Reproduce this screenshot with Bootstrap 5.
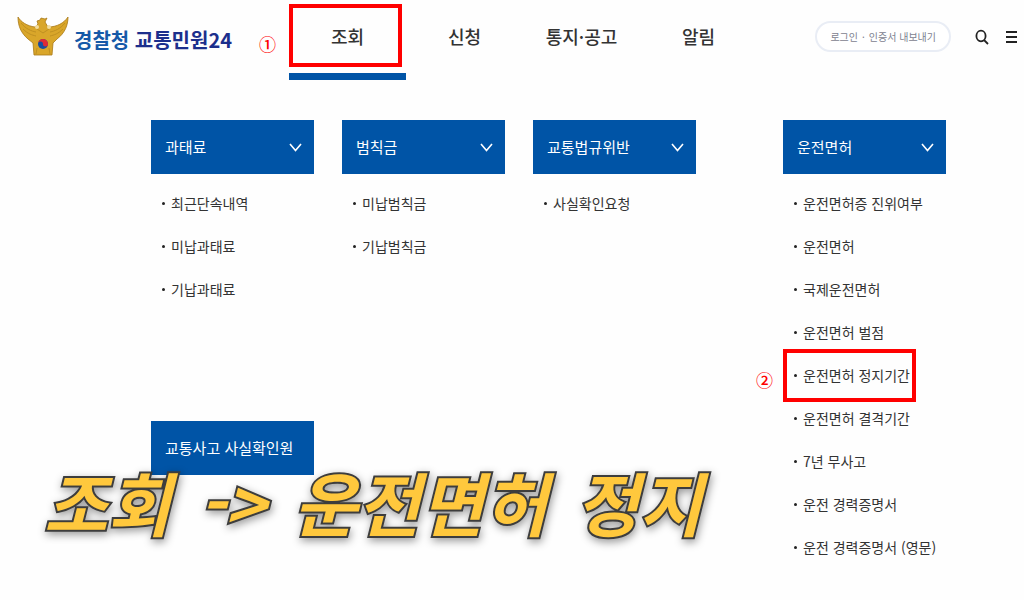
<!DOCTYPE html>
<html lang="ko">
<head>
<meta charset="utf-8">
<meta name="viewport" content="width=device-width, initial-scale=1">
<title>경찰청 교통민원24</title>
<link href="https://cdn.jsdelivr.net/npm/bootstrap@5.3.0/dist/css/bootstrap.min.css" rel="stylesheet">
<style>
  body { font-family: "Noto Sans CJK KR", sans-serif; color: #333; background: #fefefe; font-size: 14px; }
  .site-header { height: 80px; padding: 0 6px 0 17px; }
  .brand-link { width: 272px; font-size: 20px; font-weight: 700; color: #1c2f8c; gap: 5px; white-space: nowrap; }
  .brand-link .agency { color: #1559a8; }
  .main-menu .menu-link { width: 117px; height: 80px; font-size: 18px; font-weight: 500; color: #333; border-bottom: 7px solid transparent; }
  .main-menu .menu-link.active { border-color: #0054a6; }
  .login-pill { height: 31px; padding: 0 13px; gap: 4px; font-size: 10px; color: #7d828f; background: #fff; border: 2px solid #e9edf5; border-radius: 16px; white-space: nowrap; }
  .tool-button { padding: 0; border: 0; background: none; color: #222; line-height: 1; }
  .red-frame { border: 4px solid #f00; pointer-events: none; }
  .menu-frame { top: 4px; left: 0; width: 113px; height: 63px; }
  .step { color: #f00; font-size: 17px; line-height: 24px; font-weight: 500; }
  .step-one { left: -30px; top: 32px; }
  .step-two { left: -36px; top: 14px; }
  .sitemap { grid-template-columns: 1fr 1fr 1fr 31px 1fr; grid-template-rows: minmax(273px, auto) auto; gap: 28px; padding: 40px 78px 0 151px; }
  .license-group { grid-column: 5; grid-row: 1 / span 2; }
  .accident-group { grid-column: 1; grid-row: 2; }
  .group-button { height: 54px; padding: 0 12px 0 14px; border: 0; border-radius: 0; background: #0054a6; color: #fff; font-size: 15px; white-space: nowrap; }
  .group-list { padding: 8px 0 0 9px; margin: 0; list-style: none; }
  .group-list li { height: 43px; white-space: nowrap; }
  .group-list a { color: #333; text-decoration: none; }
  .group-list a::before { content: ""; display: inline-block; width: 3px; height: 3px; margin: 0 6px 4px 2px; border-radius: 50%; background: #222; }
  .item-frame { inset: -5px 30px -5px -9px; }
  .caption { left: 44px; top: 449px; gap: 28px; margin: 0; font-size: 69px; line-height: 104px; font-weight: 700; font-style: italic; color: #ffc83d; white-space: nowrap; pointer-events: none;
    -webkit-text-stroke: 4px #3d3d3d; paint-order: stroke fill; filter: drop-shadow(1px 3px 4px rgba(0, 0, 0, .4)); }
</style>
</head>
<body class="position-relative">
<header class="site-header d-flex align-items-start">
  <a class="brand-link d-flex align-items-center text-decoration-none h-100 flex-shrink-0" href="#">
    <svg width="52" height="40" viewBox="0 0 52 40" class="flex-shrink-0 mb-2" aria-hidden="true">
      <path d="M1 1 C4 6 10 10 18 11 L21 8 L20 5 L23 4 L24 2 L28 3 L30 2 L28 6 L31 11 C40 11 47 7 51 1 C51 9 48 17 40 23 L36 27 L35 39 H17 L16 27 L11 23 C4 17 1 10 1 1Z" fill="#d9a62a" stroke="#a87918" stroke-width=".8"/>
      <path d="M4 7 C9 13 14 15 19 16 M6 13 C11 18 15 19 19 20 M48 7 C43 13 38 15 33 16 M46 13 C41 18 37 19 33 20 M19 38 L20 32 M33 38 L32 32 M20 13 L26 17 L32 13" fill="none" stroke="#b98a20" stroke-width=".8"/>
      <circle cx="20" cy="11" r="2" fill="#f3dda0"/><circle cx="32" cy="11" r="2" fill="#f3dda0"/>
      <circle cx="26" cy="28" r="5" fill="#174fa0"/>
      <path d="M21 28 A5 5 0 0 1 31 28 A2.5 2.5 0 0 1 26 28 A2.5 2.5 0 0 0 21 28Z" fill="#e02a35"/>
    </svg>
    <span><span class="agency">경찰청</span> 교통민원24</span>
  </a>
  <nav class="main-menu d-flex position-relative flex-shrink-0" aria-label="주 메뉴">
    <a class="menu-link active d-flex align-items-center justify-content-center text-decoration-none" href="#">조회</a>
    <a class="menu-link d-flex align-items-center justify-content-center text-decoration-none" href="#">신청</a>
    <a class="menu-link d-flex align-items-center justify-content-center text-decoration-none" href="#">통지·공고</a>
    <a class="menu-link d-flex align-items-center justify-content-center text-decoration-none" href="#">알림</a>
    <span class="step step-one position-absolute">①</span>
    <span class="red-frame menu-frame position-absolute"></span>
  </nav>
  <div class="d-flex align-items-center ms-auto h-100 pb-2 flex-shrink-0">
    <button type="button" class="login-pill d-flex align-items-center"><span>로그인</span><span>·</span><span>인증서 내보내기</span></button>
    <button type="button" class="tool-button ms-4" aria-label="검색">
      <svg width="14" height="16" viewBox="0 0 14 16" fill="none" stroke="currentColor" stroke-width="1.8"><ellipse cx="6" cy="7" rx="4.6" ry="5.3"/><path d="M9 11 L13 15"/></svg>
    </button>
    <button type="button" class="tool-button ms-3" aria-label="전체 메뉴">
      <svg width="13" height="14" viewBox="0 0 13 14" stroke="currentColor" stroke-width="1.8"><path d="M1 2 H12 M1 7 H12 M1 12 H12"/></svg>
    </button>
  </div>
</header>

<main class="sitemap d-grid">
  <section>
    <button type="button" class="group-button w-100 d-flex align-items-center justify-content-between">과태료
      <svg width="13" height="9" viewBox="0 0 13 9" fill="none" stroke="#fff" stroke-width="1.6"><path d="M1 1 L6.500 7.500 L12 1"/></svg></button>
    <ul class="group-list">
      <li class="d-flex align-items-center"><a href="#">최근단속내역</a></li>
      <li class="d-flex align-items-center"><a href="#">미납과태료</a></li>
      <li class="d-flex align-items-center"><a href="#">기납과태료</a></li>
    </ul>
  </section>
  <section>
    <button type="button" class="group-button w-100 d-flex align-items-center justify-content-between">범칙금
      <svg width="13" height="9" viewBox="0 0 13 9" fill="none" stroke="#fff" stroke-width="1.6"><path d="M1 1 L6.500 7.500 L12 1"/></svg></button>
    <ul class="group-list">
      <li class="d-flex align-items-center"><a href="#">미납범칙금</a></li>
      <li class="d-flex align-items-center"><a href="#">기납범칙금</a></li>
    </ul>
  </section>
  <section>
    <button type="button" class="group-button w-100 d-flex align-items-center justify-content-between">교통법규위반
      <svg width="13" height="9" viewBox="0 0 13 9" fill="none" stroke="#fff" stroke-width="1.6"><path d="M1 1 L6.500 7.500 L12 1"/></svg></button>
    <ul class="group-list">
      <li class="d-flex align-items-center"><a href="#">사실확인요청</a></li>
    </ul>
  </section>
  <section class="license-group">
    <button type="button" class="group-button w-100 d-flex align-items-center justify-content-between">운전면허
      <svg width="13" height="9" viewBox="0 0 13 9" fill="none" stroke="#fff" stroke-width="1.6"><path d="M1 1 L6.500 7.500 L12 1"/></svg></button>
    <ul class="group-list">
      <li class="d-flex align-items-center"><a href="#">운전면허증 진위여부</a></li>
      <li class="d-flex align-items-center"><a href="#">운전면허</a></li>
      <li class="d-flex align-items-center"><a href="#">국제운전면허</a></li>
      <li class="d-flex align-items-center"><a href="#">운전면허 벌점</a></li>
      <li class="d-flex align-items-center position-relative"><a href="#">운전면허 정지기간</a>
        <span class="red-frame item-frame position-absolute"></span><span class="step step-two position-absolute">②</span></li>
      <li class="d-flex align-items-center"><a href="#">운전면허 결격기간</a></li>
      <li class="d-flex align-items-center"><a href="#">7년 무사고</a></li>
      <li class="d-flex align-items-center"><a href="#">운전 경력증명서</a></li>
      <li class="d-flex align-items-center"><a href="#">운전 경력증명서 (영문)</a></li>
    </ul>
  </section>
  <section class="accident-group">
    <button type="button" class="group-button w-100 d-flex align-items-center">교통사고 사실확인원</button>
  </section>
</main>

<p class="caption position-absolute d-flex"><span>조회</span><span>-&gt;</span><span>운전면허</span><span>정지</span></p>
<script src="https://cdn.jsdelivr.net/npm/bootstrap@5.3.0/dist/js/bootstrap.bundle.min.js"></script>
</body>
</html>
